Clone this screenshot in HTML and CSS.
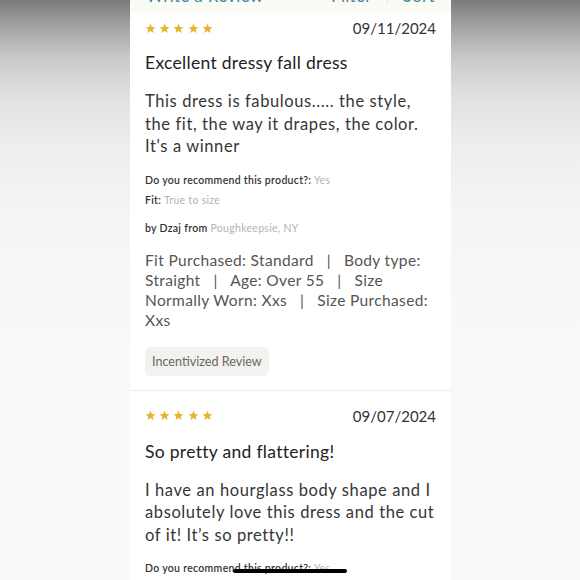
FILE: index.html
```html
<!DOCTYPE html>
<html lang="en">
<head>
<meta charset="utf-8">
<title>Reviews</title>
<link rel="stylesheet" href="styles.css">
</head>
<body>
<main class="screen">
  <header class="toolbar">
    <span class="toolbar-link">Write a Review</span>
    <span class="toolbar-actions">
      <span class="toolbar-link">Filter</span>
      <span class="toolbar-divider"></span>
      <span class="toolbar-link">Sort</span>
    </span>
  </header>

  <article class="review review-first">
    <div class="review-top">
      <div class="stars" aria-label="5 stars">
        <svg viewBox="0 0 24 24"><path d="M12 1.5l3.1 7.1 7.6.6-5.8 5 1.8 7.5L12 17.7l-6.7 4 1.8-7.5-5.8-5 7.6-.6z"/></svg>
        <svg viewBox="0 0 24 24"><path d="M12 1.5l3.1 7.1 7.6.6-5.8 5 1.8 7.5L12 17.7l-6.7 4 1.8-7.5-5.8-5 7.6-.6z"/></svg>
        <svg viewBox="0 0 24 24"><path d="M12 1.5l3.1 7.1 7.6.6-5.8 5 1.8 7.5L12 17.7l-6.7 4 1.8-7.5-5.8-5 7.6-.6z"/></svg>
        <svg viewBox="0 0 24 24"><path d="M12 1.5l3.1 7.1 7.6.6-5.8 5 1.8 7.5L12 17.7l-6.7 4 1.8-7.5-5.8-5 7.6-.6z"/></svg>
        <svg viewBox="0 0 24 24"><path d="M12 1.5l3.1 7.1 7.6.6-5.8 5 1.8 7.5L12 17.7l-6.7 4 1.8-7.5-5.8-5 7.6-.6z"/></svg>
      </div>
      <span class="date">09/11/2024</span>
    </div>
    <h2 class="review-title">Excellent dressy fall dress</h2>
    <p class="review-body">This dress is fabulous..... the style, the fit, the way it drapes, the color. It's a winner</p>
    <p class="meta meta-first"><span class="meta-label">Do you recommend this product?:</span> <span class="meta-value">Yes</span></p>
    <p class="meta"><span class="meta-label">Fit:</span> <span class="meta-value">True to size</span></p>
    <p class="meta meta-author"><span class="meta-label">by Dzaj from</span> <span class="meta-value">Poughkeepsie, NY</span></p>
    <p class="specs">Fit Purchased: Standard &nbsp;&nbsp;|&nbsp;&nbsp; Body type: Straight &nbsp;&nbsp;|&nbsp;&nbsp; Age: Over 55 &nbsp;&nbsp;|&nbsp;&nbsp; Size Normally Worn: Xxs &nbsp;&nbsp;|&nbsp;&nbsp; Size Purchased: Xxs</p>
    <span class="badge">Incentivized Review</span>
  </article>

  <article class="review review-second">
    <div class="review-top">
      <div class="stars" aria-label="5 stars">
        <svg viewBox="0 0 24 24"><path d="M12 1.5l3.1 7.1 7.6.6-5.8 5 1.8 7.5L12 17.7l-6.7 4 1.8-7.5-5.8-5 7.6-.6z"/></svg>
        <svg viewBox="0 0 24 24"><path d="M12 1.5l3.1 7.1 7.6.6-5.8 5 1.8 7.5L12 17.7l-6.7 4 1.8-7.5-5.8-5 7.6-.6z"/></svg>
        <svg viewBox="0 0 24 24"><path d="M12 1.5l3.1 7.1 7.6.6-5.8 5 1.8 7.5L12 17.7l-6.7 4 1.8-7.5-5.8-5 7.6-.6z"/></svg>
        <svg viewBox="0 0 24 24"><path d="M12 1.5l3.1 7.1 7.6.6-5.8 5 1.8 7.5L12 17.7l-6.7 4 1.8-7.5-5.8-5 7.6-.6z"/></svg>
        <svg viewBox="0 0 24 24"><path d="M12 1.5l3.1 7.1 7.6.6-5.8 5 1.8 7.5L12 17.7l-6.7 4 1.8-7.5-5.8-5 7.6-.6z"/></svg>
      </div>
      <span class="date">09/07/2024</span>
    </div>
    <h2 class="review-title">So pretty and flattering!</h2>
    <p class="review-body">I have an hourglass body shape and I absolutely love this dress and the cut of it! It’s so pretty!!</p>
    <p class="meta meta-first"><span class="meta-label">Do you recommend this product?:</span> <span class="meta-value">Yes</span></p>
  </article>

  <div class="home-indicator"></div>
</main>
</body>
</html>
```

FILE: styles.css
```css
* { box-sizing: border-box; }

html, body {
  margin: 0;
  padding: 0;
  height: 100%;
}

body {
  font-family: "Lato", "Liberation Sans", sans-serif;
  background: linear-gradient(to bottom, #7a7a7a 0px, #a8a8a8 30px, #cbcbcb 60px, #e2e2e2 100px, #eeeeee 150px, #f5f5f5 220px, #f8f8f8 320px, #f9f9f9 100%);
  display: flex;
  justify-content: flex-start;
  overflow: hidden;
}

.screen {
  margin-left: 130px;
  width: 321px;
  height: 580px;
  background: #ffffff;
  overflow: hidden;
  position: relative;
}

.toolbar {
  height: 13px;
  background: #fbfbf6;
  display: flex;
  justify-content: space-between;
  align-items: flex-end;
  padding: 0 16px 9px 16px;
  overflow: hidden;
}

.toolbar-link {
  font-size: 17px;
  line-height: 17px;
  color: #3e8ba3;
  white-space: nowrap;
  letter-spacing: 0.3px;
}

.toolbar-actions {
  display: flex;
  align-items: flex-end;
  gap: 15px;
}

.toolbar-divider {
  width: 1px;
  height: 17px;
  background: #e2e2dc;
}

.review {
  padding: 15px 15px 14px 15px;
  border-bottom: 1px solid #ececec;
  display: flex;
  flex-direction: column;
  align-items: flex-start;
}

.review-first {
  padding-top: 5px;
}

.review-top {
  width: 100%;
  height: 20px;
  display: flex;
  justify-content: space-between;
  align-items: center;
}

.stars {
  display: flex;
  gap: 3.2px;
}

.stars svg {
  width: 11px;
  height: 11px;
  fill: #e6b52f;
  display: block;
}

.date {
  font-size: 15px;
  line-height: 20px;
  color: #333333;
  letter-spacing: 0;
}

.review-title {
  margin: 14px 0 0;
  font-size: 17.5px;
  line-height: 22px;
  font-weight: 400;
  color: #222222;
  letter-spacing: 0.3px;
}

.review-second .review-title {
  margin-top: 15px;
}

.review-body {
  margin: 16px 0 0;
  font-size: 16.5px;
  line-height: 22.5px;
  color: #363636;
  letter-spacing: 0.6px;
}

.meta {
  margin: 6px 0 0;
  font-size: 10.5px;
  line-height: 14px;
  letter-spacing: 0.3px;
}

.meta-first {
  margin-top: 15px;
}

.meta-author {
  margin-top: 14px;
}

.meta-label {
  color: #333333;
  font-weight: 600;
}

.meta-value {
  color: #b3b3b3;
}

.specs {
  margin: 15px 0 0;
  font-size: 15.5px;
  line-height: 20px;
  color: #555555;
  letter-spacing: 0.35px;
}

.badge {
  margin-top: 17px;
  height: 29px;
  padding: 0 7px;
  display: inline-flex;
  align-items: center;
  background: #f3f2ee;
  border-radius: 6px;
  font-size: 12.6px;
  color: #666666;
  letter-spacing: 0;
}

.home-indicator {
  position: absolute;
  left: 103px;
  top: 569px;
  width: 114px;
  height: 4px;
  border-radius: 2px;
  background: #000000;
}
```
